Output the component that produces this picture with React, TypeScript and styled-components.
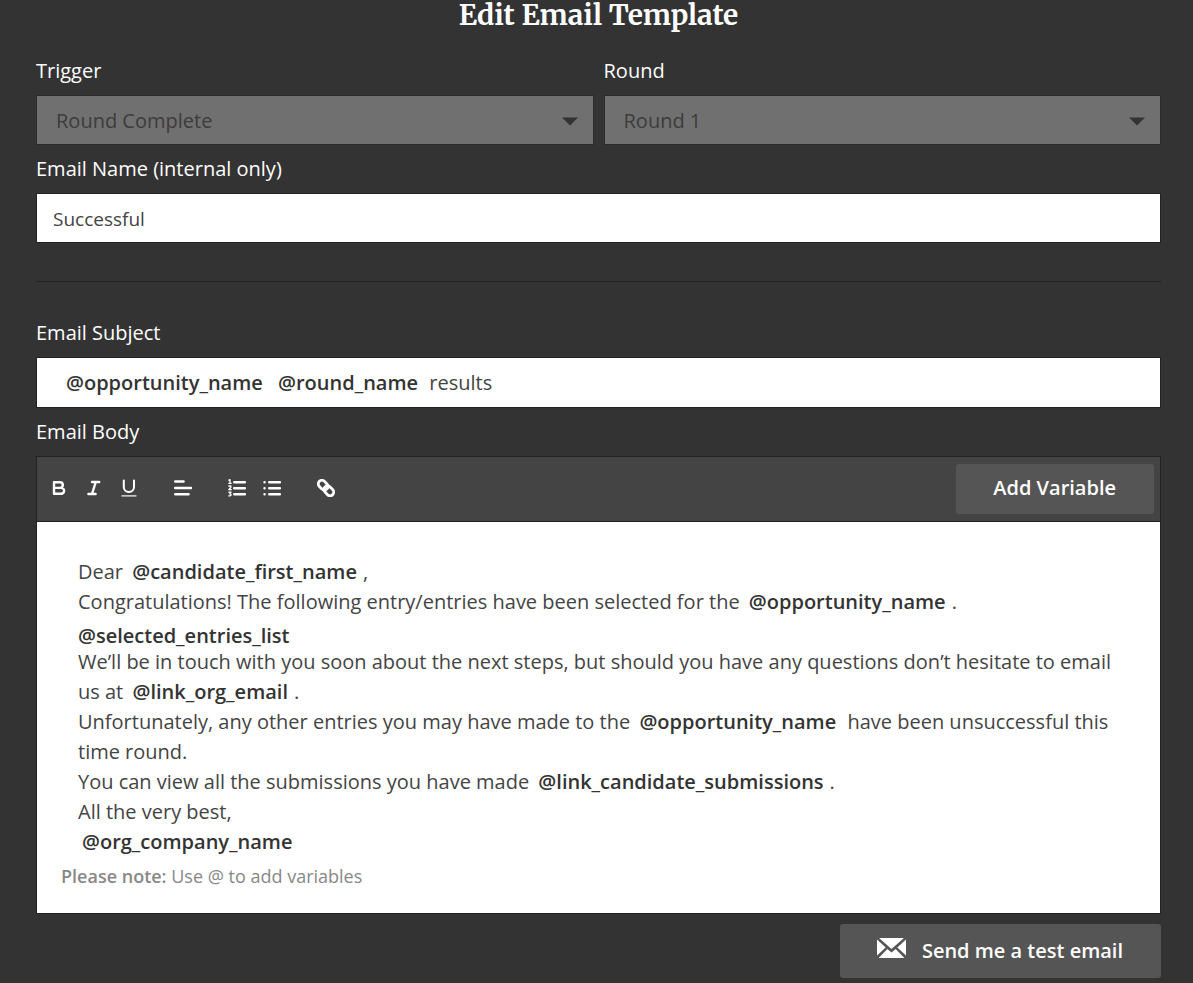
import React from "react";
import styled, { createGlobalStyle } from "styled-components";

const GlobalStyle = createGlobalStyle`
  *, *::before, *::after { box-sizing: border-box; }
  body {
    margin: 0;
    background: #333333;
    color: #ffffff;
    font-family: "Open Sans", "Noto Sans", sans-serif;
    font-size: 20px;
    line-height: 30px;
  }
`;

const Page = styled.main`
  padding: 0 32px 5px 36px;
`;

const Title = styled.h1`
  margin: 0 0 17px;
  font-family: Merriweather, "Liberation Serif", serif;
  font-size: 28px;
  font-weight: 700;
  line-height: 30px;
  text-align: center;
`;

const Columns = styled.div`
  display: grid;
  grid-template-columns: 1fr 1fr;
  gap: 10px;
`;

const Field = styled.div`
  display: flex;
  flex-direction: column;
`;

const Label = styled.label`
  padding: 9px 0;
  color: #ffffff;
  font-weight: 500;
`;

const SelectWrap = styled.div`
  position: relative;
  display: flex;
`;

const Select = styled.select`
  appearance: none;
  width: 100%;
  height: 50px;
  padding: 2px 48px 0 19px;
  border: 1px solid #2b2b2b;
  border-radius: 0;
  background: #707070;
  color: #3c3c3c;
  font: inherit;
  opacity: 1;
`;

const Caret = styled.svg`
  position: absolute;
  top: 22px;
  right: 16px;
  width: 16px;
  height: 9px;
  pointer-events: none;
`;

const Input = styled.input`
  width: 100%;
  height: 50px;
  padding: 2px 16px 0;
  border: 1px solid #222222;
  border-radius: 0;
  background: #ffffff;
  color: #444444;
  font: inherit;
  font-size: 19px;
`;

const Divider = styled.hr`
  width: 100%;
  margin: 38px 0 27px;
  border: 0;
  border-top: 1px solid #222222;
`;

const SubjectBox = styled.div`
  padding: 10px 25px 9px;
  border: 1px solid #222222;
  background: #ffffff;
  color: #444444;
`;

const Variable = styled.span`
  padding: 0 6px 0 4px;
  color: #333333;
  font-weight: 600;
`;

const Editor = styled.section`
  border: 1px solid #222222;
  background: #ffffff;
`;

const Toolbar = styled.div`
  display: flex;
  align-items: center;
  gap: 19px;
  min-height: 65px;
  padding: 0 6px 0 4px;
  border-bottom: 1px solid #222222;
  background: #444444;
`;

const ToolGroup = styled.div`
  display: flex;
`;

const ToolButton = styled.button`
  display: grid;
  place-items: center;
  width: 35px;
  height: 36px;
  padding: 0 0 2px;
  border: 0;
  background: transparent;
  color: #ffffff;

  svg {
    width: 18px;
    height: 18px;
    fill: none;
    stroke: currentColor;
    stroke-width: 2.4;
    stroke-linecap: round;
    stroke-linejoin: round;
  }
`;

const Button = styled.button`
  display: flex;
  align-items: center;
  justify-content: center;
  gap: 16px;
  border: 0;
  border-radius: 3px;
  background: #555555;
  color: #ffffff;
  font: inherit;
  font-weight: 600;
`;

const AddButton = styled(Button)`
  height: 50px;
  margin-left: auto;
  padding: 0 38px 2px 37px;
`;

const SendButton = styled(Button)`
  height: 54px;
  padding: 0 38px 0 37px;

  svg { margin-bottom: 6px; }
`;

const Body = styled.div`
  padding: 35px 41px 0;
  color: #444444;

  p { margin: 0; }
`;

const EntriesList = styled.div`
  padding-top: 8px;
  color: #333333;
  font-weight: 600;
  line-height: 22px;
`;

const Note = styled.p`
  margin: 0;
  padding: 4px 24px 22px;
  color: #888888;
  font-size: 18px;

  strong { font-weight: 600; }
`;

const Footer = styled.footer`
  display: flex;
  justify-content: flex-end;
  padding-top: 10px;
`;

function SelectField({ id, label, value }: { id: string; label: string; value: string }) {
  return (
    <Field>
      <Label htmlFor={id}>{label}</Label>
      <SelectWrap>
        <Select id={id} disabled defaultValue={value}>
          <option>{value}</option>
        </Select>
        <Caret viewBox="0 0 16 9" aria-hidden="true">
          <path d="M0 0.5H16L8 8.5Z" fill="#333333" />
        </Caret>
      </SelectWrap>
    </Field>
  );
}

function Tool({ label, children }: { label: string; children: React.ReactNode }) {
  return (
    <ToolButton type="button" aria-label={label}>
      <svg viewBox="0 0 18 18" aria-hidden="true">{children}</svg>
    </ToolButton>
  );
}

export default function App() {
  return (
    <>
      <GlobalStyle />
      <Page>
        <Title>Edit Email Template</Title>
        <Columns>
          <SelectField id="trigger" label="Trigger" value="Round Complete" />
          <SelectField id="round" label="Round" value="Round 1" />
        </Columns>
        <Field>
          <Label htmlFor="email-name">Email Name (internal only)</Label>
          <Input id="email-name" defaultValue="Successful" />
        </Field>
        <Divider />
        <Field>
          <Label as="span" id="subject-label">Email Subject</Label>
          <SubjectBox role="textbox" aria-labelledby="subject-label" contentEditable suppressContentEditableWarning spellCheck={false}>
            <Variable>@opportunity_name</Variable> <Variable>@round_name</Variable> results
          </SubjectBox>
        </Field>
        <Field>
          <Label as="span" id="body-label">Email Body</Label>
          <Editor>
            <Toolbar role="toolbar" aria-label="Formatting">
              <ToolGroup>
                <Tool label="Bold">
                  <path d="M4 3.3H10A2.8 2.8 0 0 1 10 8.9H4ZM4 8.9H11.2A2.9 2.9 0 0 1 11.2 14.8H4Z" />
                </Tool>
                <Tool label="Italic">
                  <path d="M7 3H14.2M3.4 15H10.6M10.8 3L7 15" />
                </Tool>
                <Tool label="Underline">
                  <path d="M3.8 1.4V8A5.1 5.1 0 0 0 14 8V1.4" strokeWidth="2" />
                  <path d="M1.5 16.9H16.5" strokeWidth="1.2" strokeLinecap="butt" />
                </Tool>
              </ToolGroup>
              <ToolGroup>
                <Tool label="Align">
                  <path d="M1.2 2.5H9.6M1.2 9H17.4M1.2 15.3H14.6" />
                </Tool>
              </ToolGroup>
              <ToolGroup>
                <Tool label="Numbered list">
                  <path d="M6.2 3.2H17M6.2 9.2H17M6.2 15.2H17" />
                  <path d="M0.9 1.2L2 0.7V4.3M0.8 4.3H3.2M0.8 7H2.8V8.5L0.8 10.7H3.2M0.8 13.2H3L1.8 14.8C3.7 14.8 3.5 17.3 0.8 16.9" strokeWidth="1.3" />
                </Tool>
                <Tool label="Bulleted list">
                  <path d="M6.2 3.2H17M6.2 9.2H17M6.2 15.2H17M1.5 3.2H1.6M1.5 9.2H1.6M1.5 15.2H1.6" />
                </Tool>
              </ToolGroup>
              <ToolGroup>
                <Tool label="Insert link">
                  <g transform="rotate(45 9 9)">
                    <rect x="-0.4" y="5.4" width="10.8" height="7.2" rx="3.6" strokeWidth="2.8" />
                    <rect x="7.6" y="5.4" width="10.8" height="7.2" rx="3.6" strokeWidth="2.8" />
                  </g>
                </Tool>
              </ToolGroup>
              <AddButton type="button">Add Variable</AddButton>
            </Toolbar>
            <Body role="textbox" aria-multiline="true" aria-labelledby="body-label" contentEditable suppressContentEditableWarning spellCheck={false}>
              <p>Dear <Variable>@candidate_first_name</Variable>,</p>
              <p>Congratulations! The following entry/entries have been selected for the <Variable>@opportunity_name</Variable>.</p>
              <EntriesList>@selected_entries_list</EntriesList>
              <p>We’ll be in touch with you soon about the next steps, but should you have any questions don’t hesitate to email us at <Variable>@link_org_email</Variable>.</p>
              <p>Unfortunately, any other entries you may have made to the <Variable>@opportunity_name</Variable> have been unsuccessful this time round.</p>
              <p>You can view all the submissions you have made <Variable>@link_candidate_submissions</Variable>.</p>
              <p>All the very best,</p>
              <p><Variable>@org_company_name</Variable></p>
            </Body>
            <Note><strong>Please note:</strong> Use @ to add variables</Note>
          </Editor>
        </Field>
        <Footer>
          <SendButton type="button">
            <svg width="29" height="20" viewBox="0 0 28 20" preserveAspectRatio="none" aria-hidden="true">
              <path fill="#ffffff" d="M2 0H26L14 11ZM0 1.6L8.4 9.4L0 17.6ZM28 1.6V17.6L19.6 9.4ZM10 10.9L14 14.6L18 10.9L26.4 20H1.6Z" />
            </svg>
            Send me a test email
          </SendButton>
        </Footer>
      </Page>
    </>
  );
}
